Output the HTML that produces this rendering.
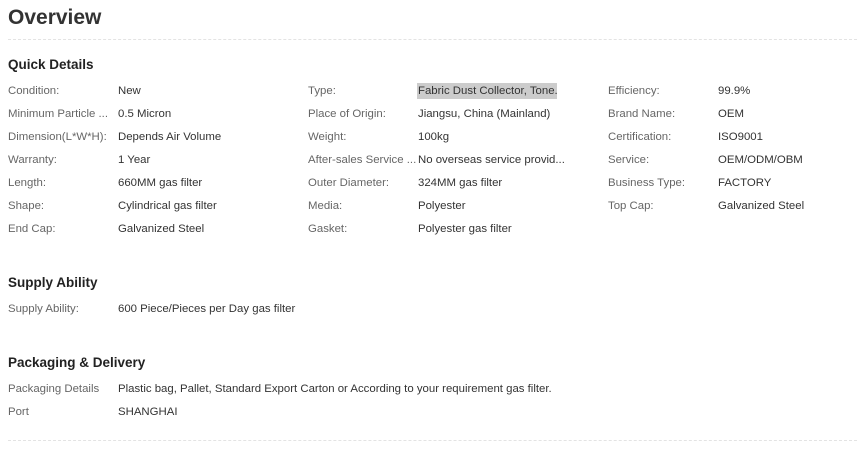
<!DOCTYPE html>
<html><head><meta charset="utf-8"><style>
body{margin:0;width:857px;height:449px;background:#fff;font-family:"Liberation Sans",sans-serif;position:relative;overflow:hidden}
.a{position:absolute;white-space:nowrap;font-size:11.4px;line-height:14px}
.l{color:#666}.v{color:#333}
h1{position:absolute;left:8px;top:5px;margin:0;font-size:21px;line-height:26px;color:#333;font-weight:bold}
h2{position:absolute;left:8px;margin:0;font-size:13.5px;line-height:16px;color:#222;font-weight:bold}
.hr{position:absolute;left:8px;width:849px;border-top:1px dashed #e3e3e3;height:0}
.hl{background:#ccc}
</style></head><body>
<h1>Overview</h1>
<div class="hr" style="top:39px"></div>
<h2 style="top:57px">Quick Details</h2>
<div class="a l" style="left:8px;top:84px">Condition:</div><div class="a v" style="left:118px;top:84px">New</div>
<div class="a l" style="left:308px;top:84px">Type:</div><div class="a v hl" style="left:417px;top:83px;padding:1px 1px;width:138px;overflow:hidden">Fabric Dust Collector, Tone...</div>
<div class="a l" style="left:608px;top:84px">Efficiency:</div><div class="a v" style="left:718px;top:84px">99.9%</div>

<div class="a l" style="left:8px;top:107px">Minimum Particle ...</div><div class="a v" style="left:118px;top:107px">0.5 Micron</div>
<div class="a l" style="left:308px;top:107px">Place of Origin:</div><div class="a v" style="left:418px;top:107px">Jiangsu, China (Mainland)</div>
<div class="a l" style="left:608px;top:107px">Brand Name:</div><div class="a v" style="left:718px;top:107px">OEM</div>

<div class="a l" style="left:8px;top:130px">Dimension(L*W*H):</div><div class="a v" style="left:118px;top:130px">Depends Air Volume</div>
<div class="a l" style="left:308px;top:130px">Weight:</div><div class="a v" style="left:418px;top:130px">100kg</div>
<div class="a l" style="left:608px;top:130px">Certification:</div><div class="a v" style="left:718px;top:130px">ISO9001</div>

<div class="a l" style="left:8px;top:153px">Warranty:</div><div class="a v" style="left:118px;top:153px">1 Year</div>
<div class="a l" style="left:308px;top:153px;width:108px;overflow:hidden">After-sales Service ...</div><div class="a v" style="left:418px;top:153px">No overseas service provid...</div>
<div class="a l" style="left:608px;top:153px">Service:</div><div class="a v" style="left:718px;top:153px">OEM/ODM/OBM</div>

<div class="a l" style="left:8px;top:176px">Length:</div><div class="a v" style="left:118px;top:176px">660MM gas filter</div>
<div class="a l" style="left:308px;top:176px">Outer Diameter:</div><div class="a v" style="left:418px;top:176px">324MM gas filter</div>
<div class="a l" style="left:608px;top:176px">Business Type:</div><div class="a v" style="left:718px;top:176px">FACTORY</div>

<div class="a l" style="left:8px;top:199px">Shape:</div><div class="a v" style="left:118px;top:199px">Cylindrical gas filter</div>
<div class="a l" style="left:308px;top:199px">Media:</div><div class="a v" style="left:418px;top:199px">Polyester</div>
<div class="a l" style="left:608px;top:199px">Top Cap:</div><div class="a v" style="left:718px;top:199px">Galvanized Steel</div>

<div class="a l" style="left:8px;top:222px">End Cap:</div><div class="a v" style="left:118px;top:222px">Galvanized Steel</div>
<div class="a l" style="left:308px;top:222px">Gasket:</div><div class="a v" style="left:418px;top:222px">Polyester gas filter</div>

<h2 style="top:275px">Supply Ability</h2>
<div class="a l" style="left:8px;top:302px">Supply Ability:</div><div class="a v" style="left:118px;top:302px">600 Piece/Pieces per Day gas filter</div>

<h2 style="top:355px">Packaging &amp; Delivery</h2>
<div class="a l" style="left:8px;top:382px">Packaging Details</div><div class="a v" style="left:118px;top:382px">Plastic bag, Pallet, Standard Export Carton or According to your requirement gas filter.</div>
<div class="a l" style="left:8px;top:405px">Port</div><div class="a v" style="left:118px;top:405px">SHANGHAI</div>
<div class="hr" style="top:440px"></div>
</body></html>
